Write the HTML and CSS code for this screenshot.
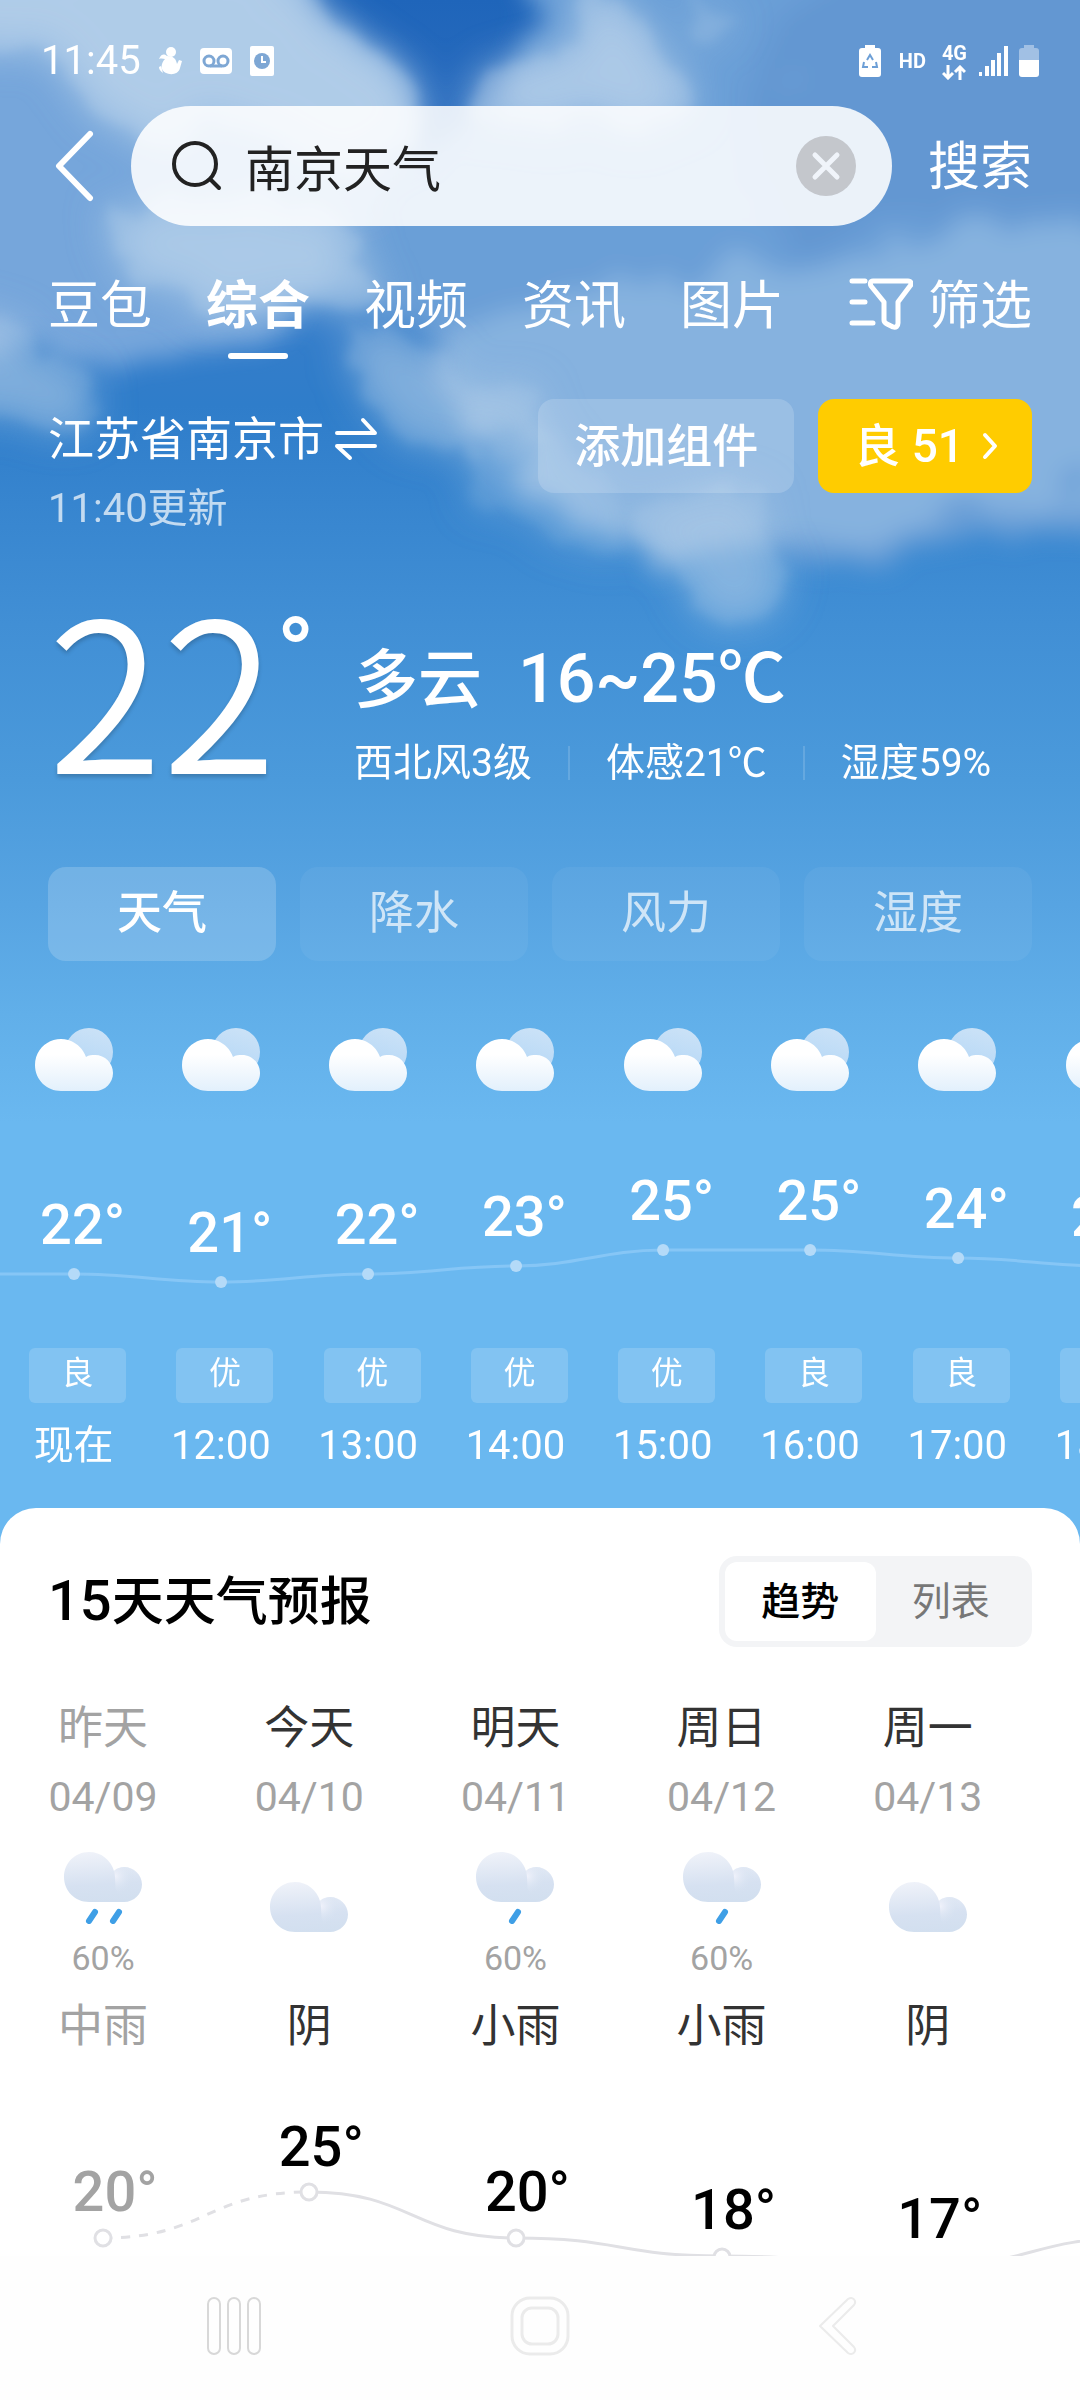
FILE: index.html
```html
<!DOCTYPE html>
<html lang="zh-CN">
<head>
<meta charset="utf-8">
<meta name="viewport" content="width=device-width, initial-scale=1">
<title>南京天气</title>
<link rel="stylesheet" href="styles.css">
</head>
<body>
<svg class="sprite" aria-hidden="true">
  <defs>
    <linearGradient id="cloudFront" x1="0" y1="0" x2="0" y2="1"><stop offset=".3" stop-color="#fff"/><stop offset="1" stop-color="#e2f0fc"/></linearGradient>
    <linearGradient id="cloudBack" x1=".7" y1="0" x2=".4" y2="1"><stop offset="0" stop-color="#cbe2f7"/><stop offset="1" stop-color="#b2d6f6"/></linearGradient>
    <linearGradient id="greyBody" x1=".4" y1="0" x2=".5" y2="1"><stop offset="0" stop-color="#eff2f9"/><stop offset=".65" stop-color="#d6e1f1"/><stop offset="1" stop-color="#d2dfef"/></linearGradient>
    <radialGradient id="greyShine" gradientUnits="userSpaceOnUse" cx="51" cy="24" r="20"><stop offset="0" stop-color="#f0f2fb"/><stop offset="1" stop-color="#d2dfef" stop-opacity="0"/></radialGradient>
    <symbol id="cloudy" viewBox="0 0 78 63">
      <circle cx="54" cy="24" r="24" fill="url(#cloudBack)"/>
      <path d="M26 11C12 11 0 22 0 37s12 26 26 26h34c10 0 18-8 18-18s-8-18-18-18c-3 0-6 0-9 2C47 18 37 11 26 11z" fill="url(#cloudFront)"/>
    </symbol>
    <symbol id="overcast" viewBox="0 0 78 50">
      <path d="M25 0C37 0 47 8 50 19C53 16 57 15 60 15C70 15 78 23 78 32.5S70 50 60 50H25C11 50 0 39 0 25S11 0 25 0z" fill="url(#greyBody)"/>
      <path d="M50 19C53 16 57 15 60 15C70 15 78 23 78 32.5L60 46C48 42 53 30 50 19z" fill="url(#greyShine)"/>
    </symbol>
  </defs>
</svg>

<div class="app">
  <main class="content">
    <section class="hero">
      <svg class="sky" viewBox="0 0 1080 1560" preserveAspectRatio="xMidYMin slice" aria-hidden="true">
        <defs>
          <linearGradient id="skyBase" x1="0" y1="0" x2="0" y2="1">
            <stop offset="0" stop-color="#1f65ba"/><stop offset=".08" stop-color="#2a6dbf"/><stop offset=".16" stop-color="#3a7dca"/><stop offset=".26" stop-color="#2f7dca"/><stop offset=".4" stop-color="#418fd5"/><stop offset=".5" stop-color="#4b9adb"/><stop offset=".58" stop-color="#57a4e2"/><stop offset=".65" stop-color="#61afe9"/><stop offset=".72" stop-color="#6ab8f0"/><stop offset="1" stop-color="#6ab8f0"/>
          </linearGradient>
          <filter id="puff" x="-20%" y="-20%" width="140%" height="140%">
            <feTurbulence type="fractalNoise" baseFrequency=".016" numOctaves="5" seed="11" result="n"/>
            <feDisplacementMap in="SourceGraphic" in2="n" scale="70" xChannelSelector="R" yChannelSelector="G" result="d"/>
            <feGaussianBlur in="d" stdDeviation="20" result="soft"/>
            <feGaussianBlur in="d" stdDeviation="6"/>
            <feComponentTransfer result="crisp"><feFuncA type="linear" slope=".4"/></feComponentTransfer>
            <feMerge><feMergeNode in="soft"/><feMergeNode in="crisp"/></feMerge>
          </filter>
          <filter id="haze" x="-20%" y="-20%" width="140%" height="140%">
            <feTurbulence type="fractalNoise" baseFrequency=".014" numOctaves="5" seed="3" result="n"/>
            <feDisplacementMap in="SourceGraphic" in2="n" scale="90" xChannelSelector="R" yChannelSelector="G"/>
            <feGaussianBlur stdDeviation="12"/>
          </filter>
        </defs>
        <rect width="1080" height="1560" fill="url(#skyBase)"/>
        <g filter="url(#haze)">
          <path d="M-60-60H260L370 50 420 150 380 240 260 330 120 370-60 340z" fill="#76a6db"/>
          <path d="M560-60H1140V520L1000 540 800 560 640 530 480 420 440 360 340 280 400 180 500 120z" fill="#6a9fd7"/>
          <path d="M440 330L700 270 1140 220V490L960 510 800 540 660 560 540 500z" fill="#86b2df"/>
          <path d="M860-60H1140V200L940 220 760 230 720 150z" fill="#6397d2"/>
        </g>
        <g filter="url(#puff)" fill="#b6d0ea">
          <path d="M-60-60H260L330 20 390 70 410 130 350 170 220 130 140 140 60 60-60 40z" opacity=".85"/>
          <path d="M480 120L510 60 560 50 590-20 640 20 690 90 650 130z" opacity=".8"/>
          <path d="M690-10L750 20 720 50 690 20z" opacity=".5"/>
          <path d="M110 210L260 190 360 240 380 290 260 310 130 290z" opacity=".75"/>
          <path d="M-60 300L30 330 90 380 80 430-60 410z" opacity=".5"/>
          <path d="M340 320L430 340 500 390 540 450 450 450 360 400z" opacity=".5"/>
          <path d="M460 430L560 440 640 540 560 550 480 500z" opacity=".3"/>
          <path d="M640 500L760 490 795 570 770 620 680 610z" opacity=".5"/>
        </g>
      </svg>

      <header class="status">
        <time class="clock">11:45</time>
        <svg width="24" height="28" viewBox="0 0 24 28" fill="#fff" aria-hidden="true"><circle cx="13" cy="5" r="5"/><path d="M9 9C4 5 2 10 1 12c3-1 4 0 6 0-3 3-4 7-3 10 2 6 16 8 18-1l2-7-3-1-2 4C18 12 16 9 9 9zM1 20c0 2 1 4 4 6L3 19z"/></svg>
        <svg width="32" height="26" viewBox="0 0 32 26" aria-hidden="true"><rect width="32" height="26" rx="4" fill="#fff"/><g fill="none" stroke="#7ea7d4" stroke-width="3"><circle cx="9" cy="13" r="5"/><circle cx="23" cy="13" r="5"/><path d="M10 18h12"/></g></svg>
        <svg width="24" height="30" viewBox="0 0 24 30" aria-hidden="true"><rect width="24" height="30" rx="2" fill="#fff"/><circle cx="12" cy="15" r="8" fill="#7ea7d4"/><path d="M12 10v6h4" fill="none" stroke="#fff" stroke-width="2"/></svg>
        <span class="spacer"></span>
        <svg width="22" height="32" viewBox="0 0 22 32" aria-hidden="true"><path d="M6 0h10v3h3q3 0 3 3v23q0 3-3 3H3q-3 0-3-3V6q0-3 3-3h3z" fill="#fff"/><path d="M8 15l3-5 3 5M5 17l-1 5h5M17 17l1 5h-5" fill="none" stroke="#6d9fd6" stroke-width="2"/></svg>
        <span class="hd">HD</span>
        <span class="net"><span>4G</span>
          <svg width="24" height="15" viewBox="0 0 24 15" fill="none" stroke="#fff" stroke-width="3" aria-hidden="true"><path d="M6 0v12M1 8l5 5 5-5M18 15V3M13 7l5-5 5 5"/></svg></span>
        <svg width="30" height="30" viewBox="0 0 30 30" fill="#fff" aria-hidden="true"><rect y="26" width="3" height="4"/><rect x="6" y="20" width="4" height="10"/><rect x="12" y="14" width="4" height="16"/><rect x="18" y="7" width="4" height="23"/><rect x="25" width="4" height="30"/></svg>
        <svg width="20" height="32" viewBox="0 0 20 32" aria-hidden="true"><path d="M5 0h10v3h2q3 0 3 3v9H0V6q0-3 3-3h2z" fill="#fff" opacity=".4"/><path d="M0 15h20v14q0 3-3 3H3q-3 0-3-3z" fill="#fff"/></svg>
      </header>

      <form class="search" onsubmit="return false">
        <button class="back" type="button" aria-label="返回"><svg width="40" height="74" viewBox="0 0 40 74" fill="none" stroke="#fff" stroke-width="6" stroke-linecap="round" stroke-linejoin="round"><path d="M36 5L5 37l31 32"/></svg></button>
        <label class="field">
          <svg width="52" height="52" viewBox="0 0 52 52" fill="none" stroke="#222" stroke-width="4" stroke-linecap="round" aria-hidden="true"><circle cx="24" cy="24" r="21"/><path d="M40 40l8 8"/></svg>
          <input type="text" value="南京天气" aria-label="搜索词">
          <button class="clear" type="button" aria-label="清除"><svg width="60" height="60" viewBox="0 0 60 60"><circle cx="30" cy="30" r="30" fill="#c4c7cc"/><path d="M19 19l22 22M41 19L19 41" stroke="#f0f4fa" stroke-width="5" stroke-linecap="round"/></svg></button>
        </label>
        <button class="submit" type="submit">搜索</button>
      </form>

      <nav class="tabs">
        <a href="#">豆包</a><a href="#" class="active">综合</a><a href="#">视频</a><a href="#">资讯</a><a href="#">图片</a>
        <button class="filter" type="button"><svg width="64" height="52" viewBox="0 0 64 52" fill="none" stroke="#fff" stroke-width="5" stroke-linecap="round" stroke-linejoin="round" aria-hidden="true"><path d="M3 3h13M3 24h13M3 45h21M24 3h35c3 0 4 3 2 5L49 24v21c0 3-2 5-5 4l-6-3c-2-1-3-2-3-4V24L22 8c-1-2-1-5 2-5z"/></svg>筛选</button>
      </nav>

      <div class="place">
        <div class="where">
          <button class="city" type="button">江苏省南京市<svg width="44" height="44" viewBox="0 0 44 44" fill="none" stroke="#fff" stroke-width="4" stroke-linecap="round" stroke-linejoin="round" aria-hidden="true"><path d="M3 16h38L29 3M41 29H3l13 12"/></svg></button>
          <p class="updated">11:40更新</p>
        </div>
        <button class="add" type="button">添加组件</button>
        <a class="aqi" href="#">良 51<svg width="16" height="28" viewBox="0 0 16 28" fill="none" stroke="#fff" stroke-width="4" stroke-linecap="round" stroke-linejoin="round" aria-hidden="true"><path d="M3 3l10 11L3 25"/></svg></a>
      </div>

      <div class="now">
        <p class="temp">22<sup>°</sup></p>
        <div class="summary">
          <p class="range">多云<span>16~25℃</span></p>
          <ul class="facts"><li>西北风3级</li><li>体感21℃</li><li>湿度59%</li></ul>
        </div>
      </div>

      <div class="metrics">
        <button type="button" class="active">天气</button><button type="button">降水</button><button type="button">风力</button><button type="button">湿度</button>
      </div>

      <div class="hourly">
        <ol class="hours">
          <li><svg class="icon"><use href="#cloudy"/></svg><span class="deg" style="--drop:3">22°</span><span class="air">良</span><time>现在</time></li>
          <li><svg class="icon"><use href="#cloudy"/></svg><span class="deg" style="--drop:4">21°</span><span class="air">优</span><time>12:00</time></li>
          <li><svg class="icon"><use href="#cloudy"/></svg><span class="deg" style="--drop:3">22°</span><span class="air">优</span><time>13:00</time></li>
          <li><svg class="icon"><use href="#cloudy"/></svg><span class="deg" style="--drop:2">23°</span><span class="air">优</span><time>14:00</time></li>
          <li><svg class="icon"><use href="#cloudy"/></svg><span class="deg" style="--drop:0">25°</span><span class="air">优</span><time>15:00</time></li>
          <li><svg class="icon"><use href="#cloudy"/></svg><span class="deg" style="--drop:0">25°</span><span class="air">良</span><time>16:00</time></li>
          <li><svg class="icon"><use href="#cloudy"/></svg><span class="deg" style="--drop:1">24°</span><span class="air">良</span><time>17:00</time></li>
          <li><svg class="icon"><use href="#cloudy"/></svg><span class="deg" style="--drop:2">23°</span><span class="air">良</span><time>18:00</time></li>
        </ol>
        <svg class="hour-line" viewBox="0 0 1178 50" preserveAspectRatio="none" aria-hidden="true">
          <path d="M0 34H74C133 34 162 42 221 42S309 34 368 34 457 26 516 26 604 10 663 10H810C869 10 899 18 958 18S1046 26 1105 26H1178" fill="none" stroke="#86c6f6" stroke-width="3"/>
          <g fill="#b4daf8"><circle cx="74" cy="34" r="6"/><circle cx="221" cy="42" r="6"/><circle cx="368" cy="34" r="6"/><circle cx="516" cy="26" r="6"/><circle cx="663" cy="10" r="6"/><circle cx="810" cy="10" r="6"/><circle cx="958" cy="18" r="6"/><circle cx="1105" cy="26" r="6"/></g>
        </svg>
      </div>
    </section>

    <section class="forecast">
      <div class="head">
        <h2><b>15</b>天天气预报</h2>
        <div class="switch"><button type="button" class="active">趋势</button><button type="button">列表</button></div>
      </div>
      <div class="daily">
        <ol class="days">
          <li class="past"><span class="day">昨天</span><time>04/09</time><span class="sky-icon"><svg width="78" height="72" viewBox="0 0 78 72"><use href="#overcast" width="78" height="50"/><path d="M31 60l-6 9M55 60l-6 9" stroke="#3f9fe6" stroke-width="6" stroke-linecap="round"/></svg><small>60%</small></span><span class="day">中雨</span><span class="high" style="--drop:5">20°</span></li>
          <li><span class="day">今天</span><time>04/10</time><span class="sky-icon"><svg width="78" height="60" viewBox="0 0 78 60"><use href="#overcast" width="78" height="50"/></svg></span><span class="day">阴</span><span class="high" style="--drop:0">25°</span></li>
          <li><span class="day">明天</span><time>04/11</time><span class="sky-icon"><svg width="78" height="72" viewBox="0 0 78 72"><use href="#overcast" width="78" height="50"/><path d="M42 60l-6 9" stroke="#3f9fe6" stroke-width="6" stroke-linecap="round"/></svg><small>60%</small></span><span class="day">小雨</span><span class="high" style="--drop:5">20°</span></li>
          <li><span class="day">周日</span><time>04/12</time><span class="sky-icon"><svg width="78" height="72" viewBox="0 0 78 72"><use href="#overcast" width="78" height="50"/><path d="M42 60l-6 9" stroke="#3f9fe6" stroke-width="6" stroke-linecap="round"/></svg><small>60%</small></span><span class="day">小雨</span><span class="high" style="--drop:7">18°</span></li>
          <li><span class="day">周一</span><time>04/13</time><span class="sky-icon"><svg width="78" height="60" viewBox="0 0 78 60"><use href="#overcast" width="78" height="50"/></svg></span><span class="day">阴</span><span class="high" style="--drop:8">17°</span></li>
        </ol>
        <svg class="day-line" viewBox="0 0 1237 100" preserveAspectRatio="none" aria-hidden="true">
          <g fill="none" stroke="#e0e0e4" stroke-width="3"><path d="M103 56C206 56 206 10 309 10" stroke-dasharray="9 9" stroke-dashoffset="-18"/><path d="M309 10C412 10 412 56 516 56S619 74 722 74 826 84 928 84C1031 84 1031 56 1134 56"/></g>
          <g fill="#fff" stroke="#e0e0e4" stroke-width="3"><circle cx="103" cy="56" r="8"/><circle cx="309" cy="10" r="8"/><circle cx="516" cy="56" r="8"/><circle cx="722" cy="75" r="8"/><circle cx="928" cy="84" r="8"/></g>
        </svg>
      </div>
    </section>
  </main>

  <nav class="system">
    <button type="button" aria-label="最近任务"><svg width="56" height="60" viewBox="0 0 56 60" fill="none" stroke="#d8d8d8" stroke-width="2"><rect x="2" y="2" width="12" height="56" rx="6"/><rect x="22" y="2" width="12" height="56" rx="6"/><rect x="42" y="2" width="12" height="56" rx="6"/></svg></button>
    <button type="button" aria-label="主屏幕"><svg width="60" height="60" viewBox="0 0 60 60" fill="none" stroke="#ebebeb" stroke-width="3"><rect x="2" y="2" width="56" height="56" rx="18"/><rect x="12" y="12" width="36" height="36" rx="10"/></svg></button>
    <button type="button" aria-label="返回上级"><svg width="40" height="60" viewBox="0 0 40 60" fill="none" stroke="#ebebeb" stroke-width="2" stroke-linejoin="round"><path d="M30 3L2 30l28 27c5 3 9-2 6-6L15 30 36 9c3-4-1-9-6-6z"/></svg></button>
  </nav>
</div>
</body>
</html>
```
FILE: styles.css
```css
* { box-sizing: border-box; margin: 0; padding: 0; }
body { font-family: Roboto, "Noto Sans CJK SC", sans-serif; background: #fff; color: #fff; }
button, input { font: inherit; color: inherit; background: none; border: 0; outline: 0; }
a { color: inherit; text-decoration: none; }
ul, ol { list-style: none; }
svg { display: block; flex: none; }
b { font-weight: inherit; }
.sprite { position: absolute; width: 0; height: 0; }

.app { display: flex; flex-direction: column; height: 100vh; }
.content { flex: 1; min-height: 0; overflow: hidden; }

/* Sky header */
.hero { position: relative; padding-bottom: 76px; background: #6ab8f0; overflow: hidden; }
.hero > * { position: relative; }
.hero > .sky { position: absolute; top: 0; left: 0; width: 100%; height: 100%; }

.status { display: flex; align-items: center; height: 106px; padding: 16px 41px 0 41px; }
.clock { font-size: 40px; line-height: 48px; margin-right: 17px; }
.status > svg + svg { margin-left: 18px; }
.spacer { flex: 1; }
.hd { margin-left: 18px; font-size: 20px; font-weight: 700; line-height: 24px; }
.net { display: grid; justify-items: center; gap: 2px; margin: 0 12px 0 16px; font-size: 20px; font-weight: 700; line-height: 20px; }
.status > svg:last-child { margin-left: 10px; }

.search { display: flex; align-items: center; height: 120px; padding: 0 48px 0 54px; }
.back { width: 77px; }
.field { flex: 1; display: flex; align-items: center; min-width: 0; height: 120px; padding: 0 36px 0 40px; border-radius: 60px; background: rgba(255, 255, 255, .87); color: #222; }
.field input { flex: 1; min-width: 0; margin-left: 22px; padding-top: 10px; font-size: 49px; line-height: 60px; }
.submit { margin-left: 36px; padding-top: 4px; font-size: 52px; line-height: 64px; }

.tabs { display: flex; align-items: flex-start; gap: 54px; padding: 45px 48px 0; font-size: 52px; line-height: 72px; }
.tabs .active { font-weight: 700; }
.tabs .active::after { content: ""; display: block; width: 60px; height: 6px; margin: 10px auto 0; border-radius: 3px; background: #fff; }
.filter { display: flex; align-items: center; gap: 15px; margin-left: auto; }
.filter svg { margin-bottom: 6px; }

.place { display: flex; align-items: flex-start; padding: 40px 48px 0; }
.where { flex: 1; padding-top: 5px; line-height: 70px; }
.city { display: flex; align-items: center; gap: 10px; font-size: 46px; }
.updated { font-size: 40px; color: rgba(255, 255, 255, .7); }
.add, .aqi { height: 94px; border-radius: 16px; font-size: 46px; font-weight: 500; line-height: 92px; }
.add { padding: 0 36px; background: rgba(255, 255, 255, .17); }
.aqi { display: flex; align-items: center; gap: 18px; margin-left: 24px; padding: 0 34px 0 36px; background: #fc0; }

.now { display: flex; align-items: flex-start; height: 160px; margin: 74px 48px 0; }
.temp { display: flex; width: 306px; font-family: "Noto Sans CJK SC", sans-serif; font-size: 208px; font-weight: 350; line-height: 132px; text-shadow: 0 3px 4px rgba(0, 0, 0, .2); }
.temp sup { font-family: Roboto, sans-serif; font-size: 100px; font-weight: 500; line-height: 72px; text-shadow: none; }
.summary { padding-top: 16px; }
.range { font-size: 64px; font-weight: 500; line-height: 90px; }
.range span { margin-left: 36px; font-size: 68px; }
.facts { display: flex; font-size: 39px; line-height: 74px; white-space: nowrap; }
.facts li { display: flex; align-items: center; }
.facts li + li::before { content: ""; width: 2px; height: 34px; margin: 0 36px; background: rgba(255, 255, 255, .15); }

.metrics { display: grid; grid-template-columns: repeat(4, 1fr); gap: 24px; padding: 89px 48px 0; }
.metrics button { height: 94px; border-radius: 18px; background: rgba(255, 255, 255, .05); color: rgba(255, 255, 255, .7); font-size: 45px; line-height: 92px; }
.metrics .active { background: rgba(255, 255, 255, .18); color: #fff; font-weight: 500; }

.hourly { width: calc(100% * 12 / 11); padding-top: 67px; }
.hours { display: grid; grid-template-columns: repeat(8, 1fr); }
.hours li { display: flex; flex-direction: column; align-items: center; }
.icon { width: 78px; height: 63px; }
.deg { height: 257px; padding: calc(78px + var(--drop) * 8px) 0 0 18px; font-size: 56px; font-weight: 500; line-height: 64px; }
.air { width: 97px; height: 55px; margin-left: 8px; border-radius: 6px; background: rgba(255, 255, 255, .16); font-size: 32px; line-height: 50px; text-align: center; }
.hours time { margin-top: 17px; font-size: 40px; line-height: 52px; }
.hour-line { position: absolute; left: 0; bottom: 182px; width: 100%; height: 50px; }

/* Fifteen-day forecast */
.forecast { position: relative; margin-top: -40px; padding: 48px 0 40px; border-radius: 36px 36px 0 0; background: #fff; color: #333; overflow: hidden; }
.head { display: flex; justify-content: space-between; align-items: center; padding: 0 48px; }
.head h2 { font-size: 52px; font-weight: 500; line-height: 84px; color: #000; }
.head h2 b { font-size: 56px; }
.switch { display: grid; grid-template-columns: 1fr 1fr; width: 313px; height: 91px; padding: 6px; border-radius: 18px; background: #f3f4f6; font-size: 39px; line-height: 72px; color: #777; }
.switch .active { border-radius: 12px; background: #fff; color: #000; font-weight: 500; }
.daily { position: relative; width: calc(100% * 63 / 55); padding-top: 54px; }
.days { display: grid; grid-template-columns: repeat(6, 1fr); }
.days li { display: flex; flex-direction: column; align-items: center; }
.day { font-size: 45px; line-height: 56px; }
.days time { margin-top: 12px; font-size: 41px; line-height: 56px; color: #a3a3a3; }
.sky-icon { display: flex; flex-direction: column; align-items: center; justify-content: center; height: 174px; }
.sky-icon small { margin-top: 20px; font-size: 34px; line-height: 28px; color: #a3a3a3; }
.high { padding: calc(60px + var(--drop) * 9px) 0 0 24px; font-size: 56px; font-weight: 500; line-height: 64px; color: #000; }
.past .day, .past .high { color: #a3a3a3; }
.day-line { position: absolute; left: 0; top: 535px; width: 100%; height: 100px; }

.system { display: flex; justify-content: space-between; padding: 40px 222px 44px 206px; background: #fefefe; position: relative; }
```
